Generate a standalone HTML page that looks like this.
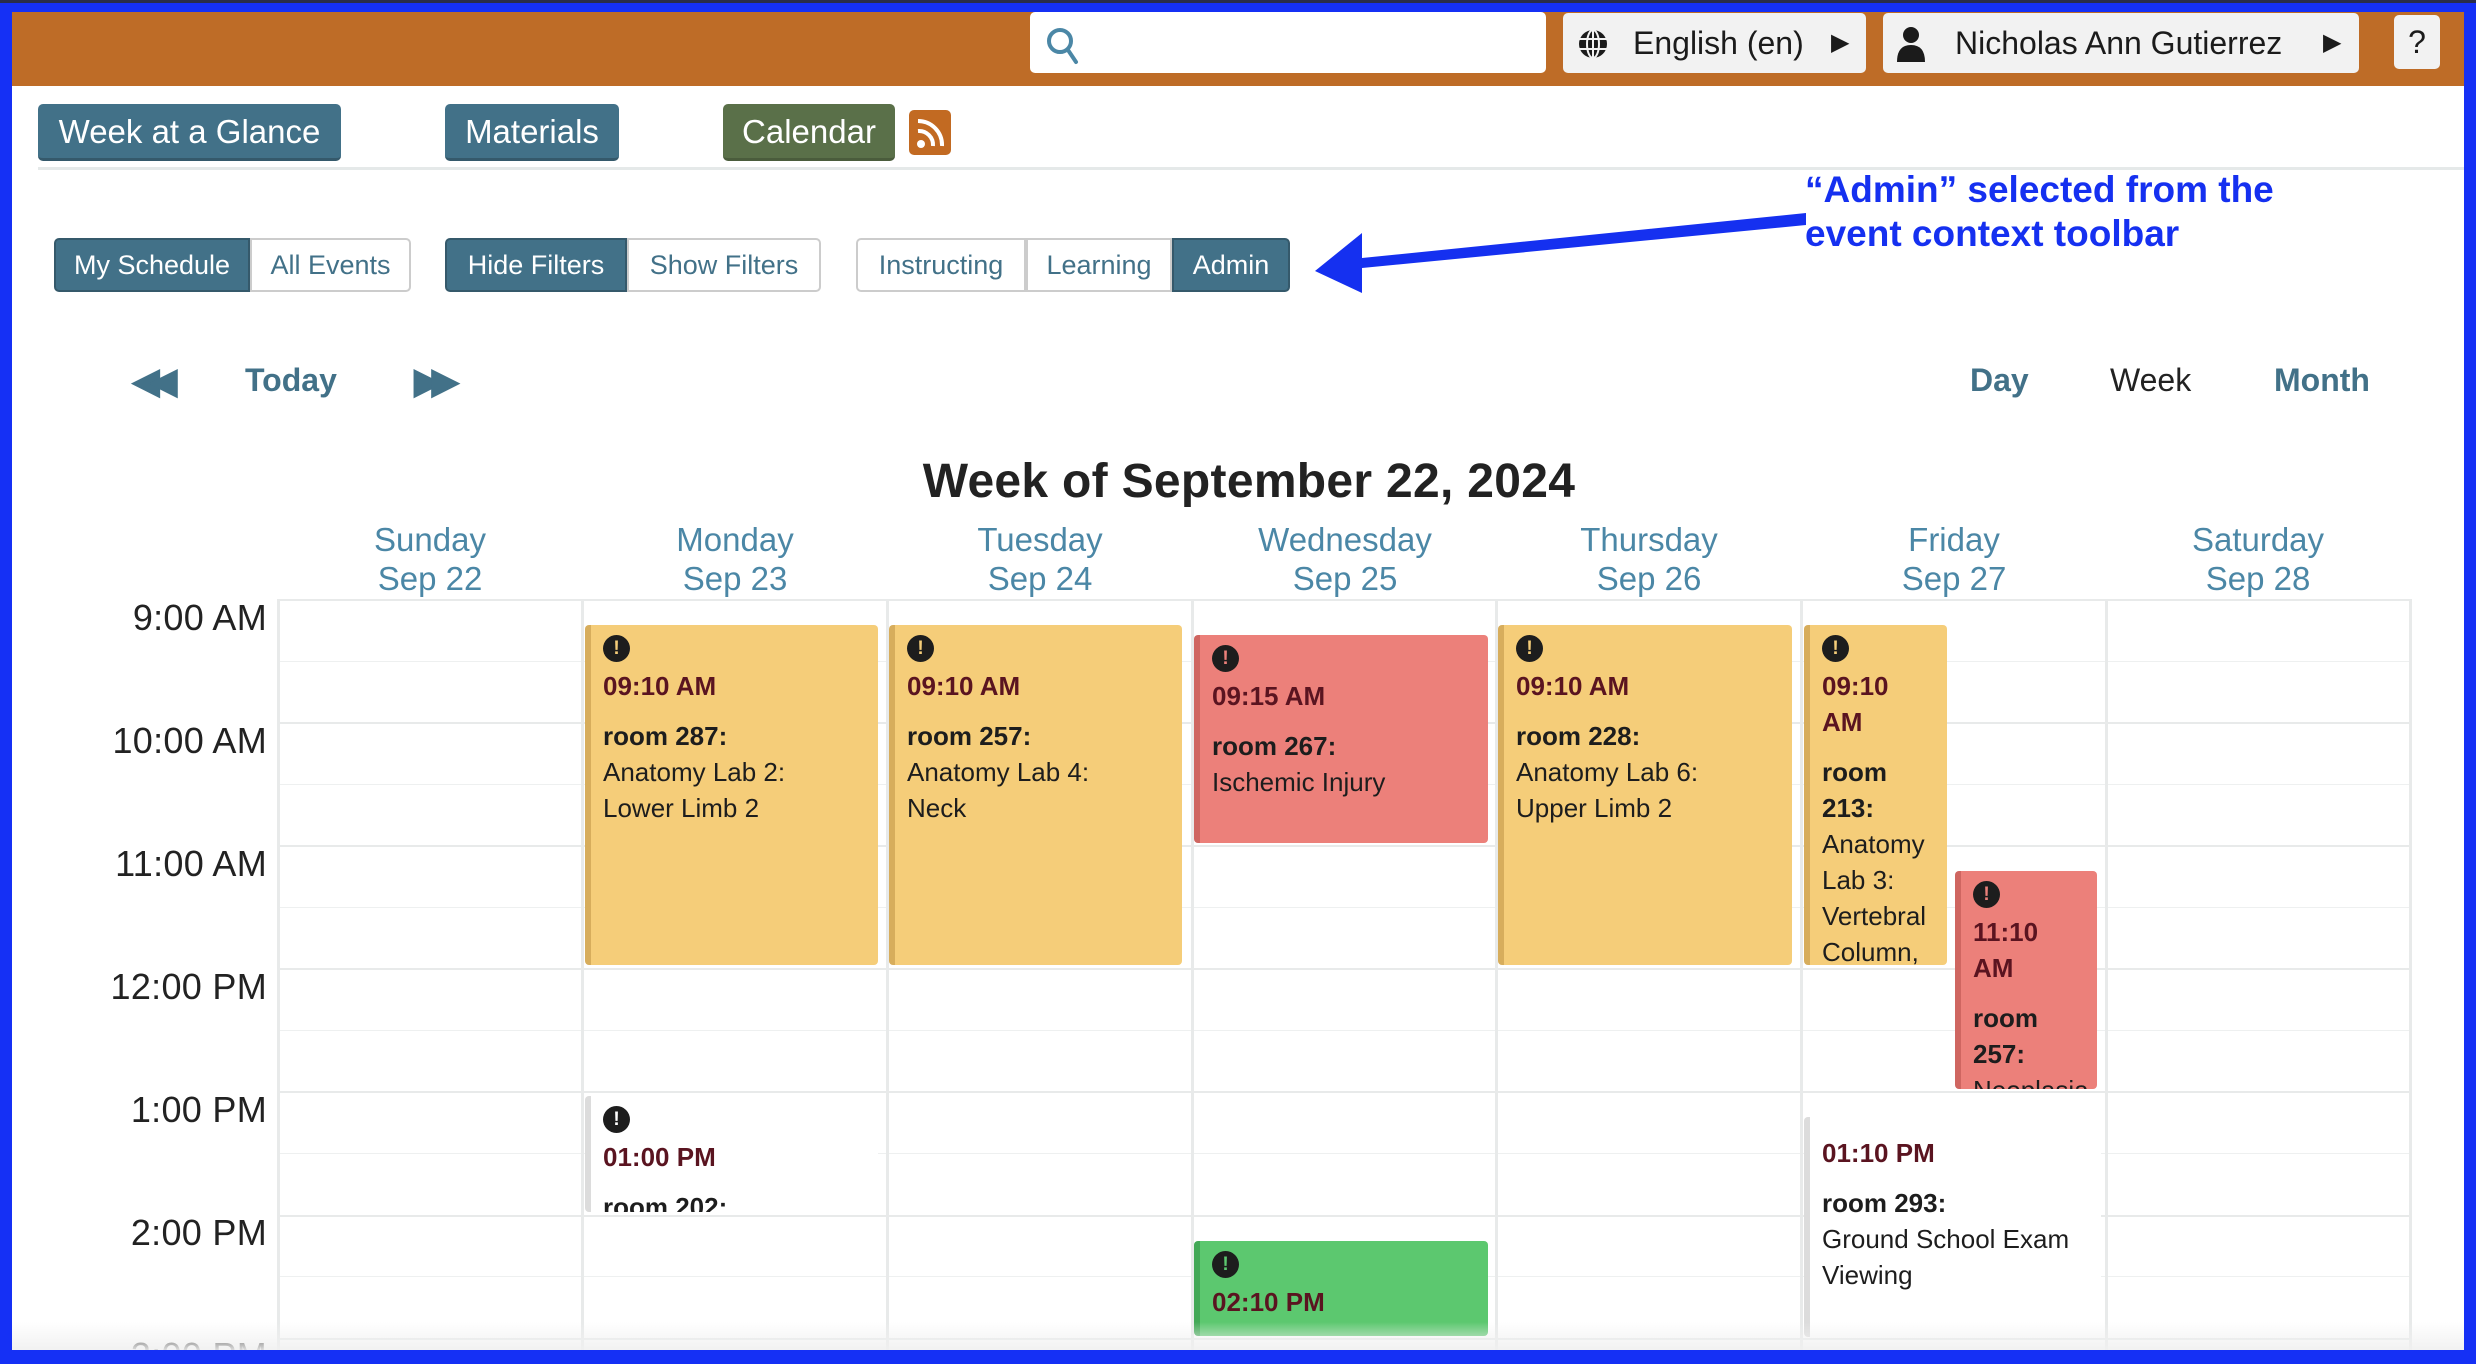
<!DOCTYPE html>
<html><head><meta charset="utf-8"><style>
*{box-sizing:border-box;margin:0;padding:0}
body{width:2476px;height:1364px;overflow:hidden;background:#1530f5;font-family:"Liberation Sans",sans-serif;position:relative}
.topline{position:absolute;left:0;top:0;width:2476px;height:3px;background:#2a2d4a}
#page{position:absolute;left:12px;top:12px;width:2452px;height:1338px;background:#fff;overflow:hidden}
.abs{position:absolute}
#hdr{position:absolute;left:0;top:0;width:2452px;height:74px;background:#be6c27}
.hb{position:absolute;top:1px;height:60px;background:#f2f2f2;border-radius:5px;color:#1b1b1b;font-size:32px;line-height:60px}
.btn{position:absolute;top:92px;height:57px;color:#fff;font-size:33px;line-height:56px;text-align:center;border-radius:5px;background:#427188;border-bottom:3px solid #35596b}
.tg{position:absolute;top:226px;height:54px;font-size:27px;line-height:50px;text-align:center;border:2px solid #ccc;color:#427188;background:#fff}
.tg.on{background:#427188;color:#fff;border-color:#35596b}
.nav{position:absolute;top:350px;font-size:32px;color:#427188;font-weight:bold}
.dh{position:absolute;top:508px;width:304px;text-align:center;color:#4b87a6;font-size:33px;line-height:39px}
.tl{position:absolute;right:2197px;font-size:36px;color:#222;text-align:right;letter-spacing:0.3px}
.hl{position:absolute;left:266px;width:2132px;height:2px;background:#e8eaea}
.hh{position:absolute;left:266px;width:2132px;height:1px;background:#eef0f0}
.vl{position:absolute;top:587px;width:3px;height:760px;background:#e8eaea}
.ev{position:absolute;border-radius:4px;border-left:6px solid;padding:10px 0 0 12px;overflow:hidden;font-size:26px;line-height:36px;color:#1d1d1d}
.y{background:#f5cd79;border-color:#d7ad5c}
.r{background:#ec807a;border-color:#cf6661}
.g{background:#5cc86f;border-color:#43a957}
.w{background:#fff;border-color:#dcdcdc}
.ic{width:27px;height:27px;border-radius:50%;background:#1d1d1d;color:#f5cd79;font-weight:bold;font-size:19px;line-height:27px;text-align:center;margin-bottom:6px}
.t{color:#5a1420;font-weight:bold;margin-bottom:14px}
.b{font-weight:bold}
</style></head><body>
<div class="topline"></div>
<div id="page">
<div id="hdr">
 <div class="abs" style="left:1018px;top:0;width:516px;height:61px;background:#fff;border-radius:5px"></div>
 <svg class="abs" style="left:1032px;top:12px" width="40" height="44" viewBox="0 0 40 44"><circle cx="16" cy="17" r="11" fill="none" stroke="#4b87a6" stroke-width="4"/><line x1="24" y1="26" x2="32" y2="38" stroke="#4b87a6" stroke-width="4" stroke-linecap="round"/></svg>
 <div class="hb" style="left:1551px;width:303px"><svg class="abs" style="left:14px;top:15px" width="32" height="32" viewBox="0 0 32 32"><circle cx="16" cy="16" r="14" fill="#1b1b1b"/><g stroke="#f2f2f2" stroke-width="2" fill="none"><ellipse cx="16" cy="16" rx="6" ry="14"/><line x1="2" y1="11" x2="30" y2="11"/><line x1="2" y1="21" x2="30" y2="21"/><line x1="16" y1="2" x2="16" y2="30"/></g></svg><span class="abs" style="left:70px">English (en)</span><span class="abs" style="left:268px;font-size:24px">&#9654;</span></div>
 <div class="hb" style="left:1871px;width:476px"><svg class="abs" style="left:12px;top:13px" width="32" height="36" viewBox="0 0 32 36"><circle cx="16" cy="9" r="8" fill="#1b1b1b"/><path d="M2 36 Q2 19 16 19 Q30 19 30 36Z" fill="#1b1b1b"/></svg><span class="abs" style="left:72px">Nicholas Ann Gutierrez</span><span class="abs" style="left:440px;font-size:24px">&#9654;</span></div>
 <div class="hb" style="left:2382px;top:3px;width:46px;height:54px;line-height:54px;text-align:center">?</div>
</div>
<div class="btn" style="left:26px;width:303px">Week at a Glance</div>
<div class="btn" style="left:433px;width:174px">Materials</div>
<div class="btn" style="left:711px;width:172px;background:#5a7049;border-color:#4a5c3c">Calendar</div>
<div class="abs" style="left:897px;top:98px;width:42px;height:45px;background:#c26a22;border-radius:5px"><svg width="42" height="45" viewBox="0 0 42 45"><circle cx="12" cy="34" r="4" fill="#fff"/><path d="M9 21 A14 14 0 0 1 24 36" stroke="#fff" stroke-width="4" fill="none"/><path d="M9 11 A24 24 0 0 1 33 36" stroke="#fff" stroke-width="4" fill="none"/></svg></div>
<div class="abs" style="left:26px;top:155px;width:2426px;height:3px;background:#e5e9e9"></div>

<div class="tg on" style="left:42px;width:196px;border-radius:5px 0 0 5px">My Schedule</div>
<div class="tg" style="left:238px;width:161px;border-radius:0 5px 5px 0">All Events</div>
<div class="tg on" style="left:433px;width:182px;border-radius:5px 0 0 5px">Hide Filters</div>
<div class="tg" style="left:615px;width:194px;border-radius:0 5px 5px 0">Show Filters</div>
<div class="tg" style="left:844px;width:170px;border-radius:5px 0 0 5px">Instructing</div>
<div class="tg" style="left:1014px;width:146px">Learning</div>
<div class="tg on" style="left:1160px;width:118px;border-radius:0 5px 5px 0">Admin</div>

<svg class="abs" style="left:1290px;top:190px" width="520" height="100" viewBox="0 0 520 100"><polygon points="13,69 60,31 60,56 504,11 504,23 60,66 60,91" fill="#1530f0"/></svg>
<div class="abs" style="left:1793px;top:156px;color:#1530f0;font-weight:bold;font-size:37px;line-height:44px">“Admin” selected from the<br>event context toolbar</div>

<div class="nav" style="left:120px;top:348px;font-size:36px;letter-spacing:-10px">&#9664;&#9664;</div>
<div class="nav" style="left:233px">Today</div>
<div class="nav" style="left:402px;top:348px;font-size:36px;letter-spacing:-10px">&#9654;&#9654;</div>
<div class="nav" style="left:1958px">Day</div>
<div class="nav" style="left:2098px;color:#222;font-weight:normal">Week</div>
<div class="nav" style="left:2262px">Month</div>

<div class="abs" style="left:0;top:442px;width:2474px;text-align:center;font-size:48px;color:#222;font-weight:bold;letter-spacing:0.3px">Week of September 22, 2024</div>

<div class="dh" style="left:266px">Sunday<br>Sep 22</div>
<div class="dh" style="left:571px">Monday<br>Sep 23</div>
<div class="dh" style="left:876px">Tuesday<br>Sep 24</div>
<div class="dh" style="left:1181px">Wednesday<br>Sep 25</div>
<div class="dh" style="left:1485px">Thursday<br>Sep 26</div>
<div class="dh" style="left:1790px">Friday<br>Sep 27</div>
<div class="dh" style="left:2094px">Saturday<br>Sep 28</div>

<div class="hl" style="top:587px"></div><div class="hh" style="top:649px"></div>
<div class="hl" style="top:710px"></div><div class="hh" style="top:772px"></div>
<div class="hl" style="top:833px"></div><div class="hh" style="top:895px"></div>
<div class="hl" style="top:956px"></div><div class="hh" style="top:1018px"></div>
<div class="hl" style="top:1079px"></div><div class="hh" style="top:1141px"></div>
<div class="hl" style="top:1203px"></div><div class="hh" style="top:1264px"></div>
<div class="hl" style="top:1326px"></div>
<div class="vl" style="left:265px"></div><div class="vl" style="left:569px"></div><div class="vl" style="left:874px"></div><div class="vl" style="left:1179px"></div><div class="vl" style="left:1483px"></div><div class="vl" style="left:1788px"></div><div class="vl" style="left:2093px"></div><div class="vl" style="left:2397px"></div>

<div class="tl" style="top:585px">9:00 AM</div>
<div class="tl" style="top:708px">10:00 AM</div>
<div class="tl" style="top:831px">11:00 AM</div>
<div class="tl" style="top:954px">12:00 PM</div>
<div class="tl" style="top:1077px">1:00 PM</div>
<div class="tl" style="top:1200px">2:00 PM</div>
<div class="tl" style="top:1323px">3:00 PM</div>

<div class="ev y" style="left:573px;top:613px;width:293px;height:340px"><div class="ic">!</div><div class="t">09:10 AM</div><div class="b">room 287:</div>Anatomy Lab 2:<br>Lower Limb 2</div>
<div class="ev y" style="left:877px;top:613px;width:293px;height:340px"><div class="ic">!</div><div class="t">09:10 AM</div><div class="b">room 257:</div>Anatomy Lab 4:<br>Neck</div>
<div class="ev r" style="left:1182px;top:623px;width:294px;height:208px"><div class="ic" style="color:#ec807a">!</div><div class="t">09:15 AM</div><div class="b">room 267:</div>Ischemic Injury</div>
<div class="ev y" style="left:1486px;top:613px;width:294px;height:340px"><div class="ic">!</div><div class="t">09:10 AM</div><div class="b">room 228:</div>Anatomy Lab 6:<br>Upper Limb 2</div>
<div class="ev y" style="left:1792px;top:613px;width:143px;height:340px"><div class="ic">!</div><div class="t" style="margin-bottom:14px">09:10<br>AM</div><div class="b">room<br>213:</div>Anatomy<br>Lab 3:<br>Vertebral<br>Column,</div>
<div class="ev r" style="left:1943px;top:859px;width:142px;height:218px"><div class="ic" style="color:#ec807a">!</div><div class="t">11:10<br>AM</div><div class="b">room<br>257:</div>Neoplasia</div>
<div class="ev w" style="left:573px;top:1084px;width:293px;height:116px"><div class="ic" style="color:#fff">!</div><div class="t">01:00 PM</div><div class="b">room 202:</div></div>
<div class="ev g" style="left:1182px;top:1229px;width:294px;height:95px"><div class="ic" style="color:#5cc86f">!</div><div class="t">02:10 PM</div></div>
<div class="ev w" style="left:1792px;top:1105px;width:297px;height:220px;padding-top:18px"><div class="t">01:10 PM</div><div class="b">room 293:</div>Ground School Exam<br>Viewing</div>

<div class="abs" style="left:0;top:1310px;width:2452px;height:28px;background:linear-gradient(rgba(245,245,245,0),rgba(240,240,240,0.9))"></div>
</div>
</body></html>
